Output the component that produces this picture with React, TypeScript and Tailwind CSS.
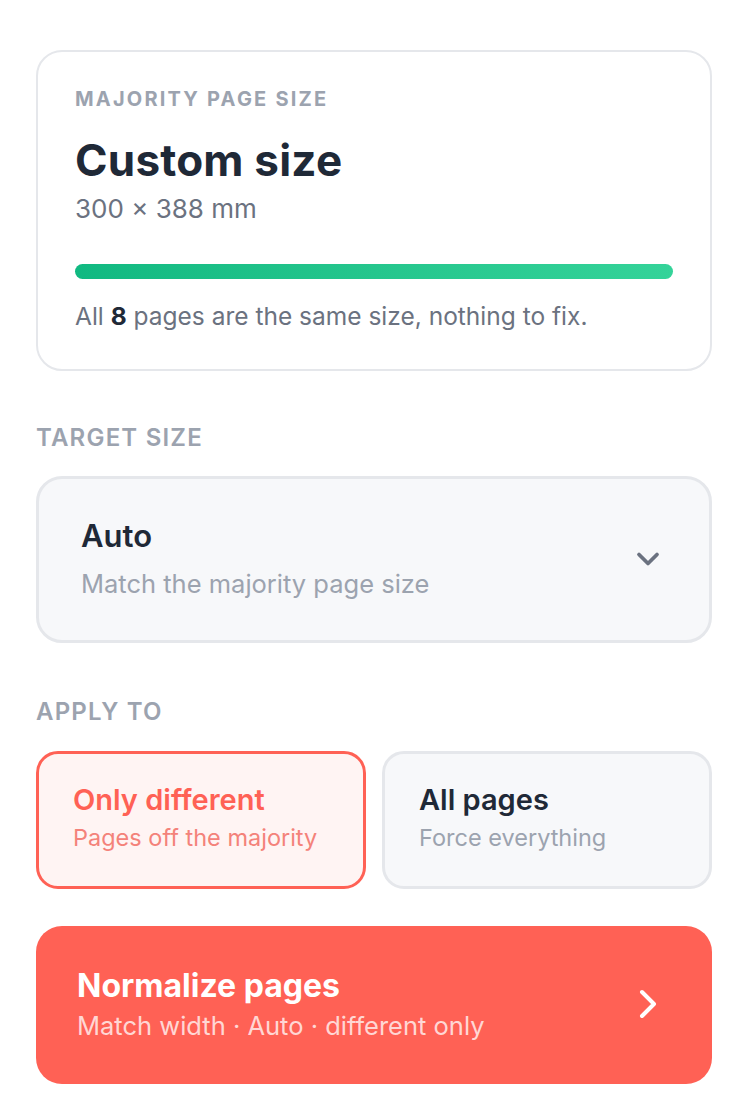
import React from 'react';

const Chevron = ({ dir, className }: { dir: 'down' | 'right'; className?: string }) => (
  <svg viewBox="0 0 24 24" fill="none" stroke="currentColor" strokeLinecap="round" strokeLinejoin="round" className={className}>
    {dir === 'down' ? <path d="m6 9 6 6 6-6" strokeWidth={2.5} /> : <path d="m9 18 6-6-6-6" strokeWidth={2} />}
  </svg>
);

const SectionLabel = ({ children }: { children: React.ReactNode }) => (
  <h4 className="text-[24px] font-semibold tracking-[0.05em] text-[#9ca3af] uppercase leading-[28px]">{children}</h4>
);

export default function App() {
  return (
    <div className="min-h-screen bg-white px-9 pt-[50px] pb-9 font-['Inter',sans-serif]">
      {/* Summary */}
      <div className="rounded-[26px] border-2 border-[#e5e7eb] px-[37px] pt-[35px] pb-[38px]">
        <div className="text-[20px] font-bold tracking-[0.11em] text-[#9ca3af] uppercase leading-6">Majority page size</div>
        <div className="mt-[23px] text-[44px] font-bold tracking-[0.005em] text-[#1f2937] leading-[52px]">Custom size</div>
        <div className="mt-[7px] text-[26px] text-[#6b7280] leading-8">300 × 388 mm</div>
        <div className="mt-[39px] h-[15px] rounded-full bg-gradient-to-r from-[#10b981] to-[#34d399]" />
        <p className="mt-[22px] text-[24.5px] text-[#6b7280] leading-[30px]">
          All <span className="font-bold text-[#1f2937]">8</span> pages are the same size, nothing to fix.
        </p>
      </div>

      {/* Target size */}
      <div className="mt-[53px]">
        <SectionLabel>Target size</SectionLabel>
        <button className="mt-[24px] flex w-full items-center justify-between rounded-[26px] border-[3px] border-[#e5e7eb] bg-[#f7f8fa] pt-[38px] pb-[40px] pl-[42px] pr-[43px] text-left">
          <div className="flex flex-col gap-[13px]">
            <span className="text-[31px] font-semibold text-[#1f2937] leading-[38px]">Auto</span>
            <span className="text-[25.5px] text-[#9ca3af] leading-8">Match the majority page size</span>
          </div>
          <Chevron dir="down" className="h-9 w-9 text-[#6b7280]" />
        </button>
      </div>

      {/* Apply to */}
      <div className="mt-[55px]">
        <SectionLabel>Apply to</SectionLabel>
        <div className="mt-[25px] grid grid-cols-2 gap-4">
          <button className="flex flex-col gap-[5px] rounded-[22px] border-[3px] border-[#ff6155] bg-[#fff4f3] px-[34px] pt-[28px] pb-[33px] text-left">
            <span className="text-[29px] font-semibold text-[#ff6155] leading-9">Only different</span>
            <span className="text-[23.5px] text-[#f4827a] leading-[30px]">Pages off the majority</span>
          </button>
          <button className="flex flex-col gap-[5px] rounded-[22px] border-[3px] border-[#e5e7eb] bg-[#f7f8fa] px-[34px] pt-[28px] pb-[33px] text-left">
            <span className="text-[29px] font-semibold text-[#1f2937] leading-9">All pages</span>
            <span className="text-[23.5px] text-[#9ca3af] leading-[30px]">Force everything</span>
          </button>
        </div>
      </div>

      {/* Action */}
      <button className="mt-[37px] flex w-full items-center justify-between rounded-[26px] bg-[#ff6155] pt-[40px] pb-[42px] pl-[41px] pr-[40px] text-left">
        <div className="flex flex-col gap-[4px]">
          <span className="text-[32px] font-bold text-white leading-10">Normalize pages</span>
          <span className="text-[25.5px] text-white/75 leading-8">Match width · Auto · different only</span>
        </div>
        <Chevron dir="right" className="h-12 w-12 text-white" />
      </button>
    </div>
  );
}
